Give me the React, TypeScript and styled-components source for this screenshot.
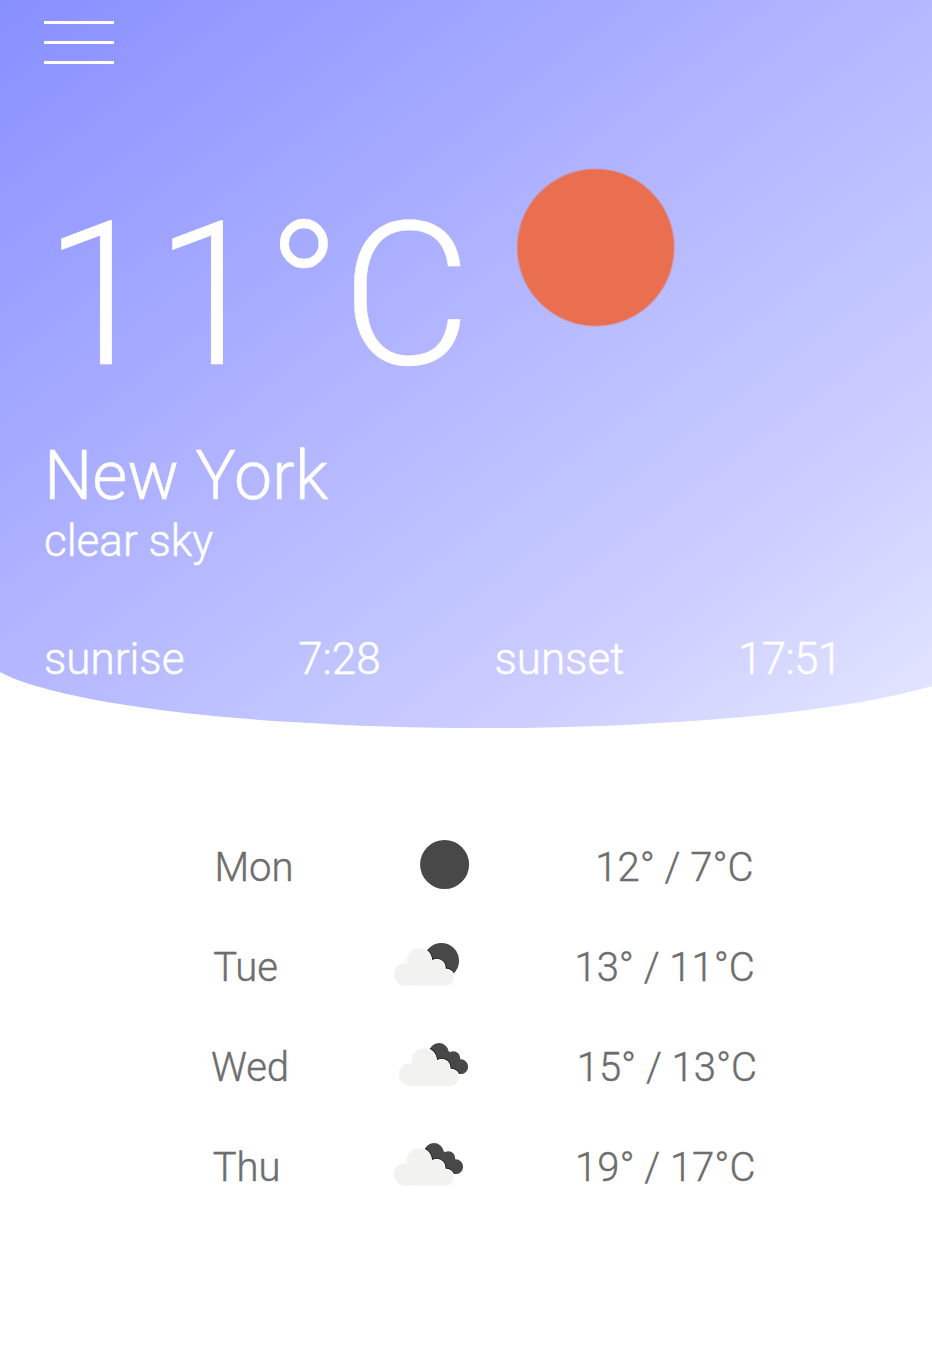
import React from "react";
import styled, { createGlobalStyle } from "styled-components";

const GlobalStyle = createGlobalStyle`
  * { box-sizing: border-box; }
  body {
    margin: 0;
    background: #fff;
    font-family: Roboto, "Liberation Sans", sans-serif;
    font-weight: 300;
    overflow-x: hidden;
  }
`;

const Page = styled.main`
  width: 932px;
  height: 1366px;
  overflow: hidden;
  background: #fff;
`;

const Header = styled.header`
  width: 1008px;
  height: 728px;
  margin-left: -20px;
  padding: 21px 0 0 64px;
  color: #fff;
  background: linear-gradient(143deg, #878eff 0%, #b3b6ff 46%, #c0c4ff 63%, #cdcdff 76%, #d7daff 86%, #e9e9ff 100%);
  border-radius: 0 0 504px 504px / 0 0 77.5px 77.5px;
`;

const MenuButton = styled.button`
  display: flex;
  flex-direction: column;
  gap: 17px;
  width: 70px;
  padding: 0;
  border: 0;
  background: none;
`;

const MenuLine = styled.span`
  width: 100%;
  height: 3px;
  background: #fff;
`;

const Current = styled.section`
  display: flex;
  height: 320px;
  margin-top: 24px;
`;

const Temperature = styled.h1`
  width: 392px;
  margin: 0;
  padding-top: 108px;
  font-size: 200px;
  font-weight: 300;
  line-height: 200px;
  white-space: nowrap;
  -webkit-text-stroke: 0.4px currentColor;
`;

const CurrentIcon = styled.svg`
  width: 320px;
  height: 320px;
`;

const City = styled.h2`
  margin: 34px 0 0;
  font-size: 68px;
  font-weight: 300;
  line-height: 68px;
  -webkit-text-stroke: 0.5px currentColor;
`;

const Description = styled.p`
  margin: 9px 0 0;
  font-size: 44px;
  line-height: 44px;
  -webkit-text-stroke: 0.5px currentColor;
`;

const SunTimes = styled.div`
  display: flex;
  justify-content: space-between;
  width: 797.5px;
  margin-top: 74px;
  font-size: 44px;
  line-height: 44px;
  -webkit-text-stroke: 0.5px currentColor;
`;

const SunTime = styled.span<{ $tight?: boolean }>`
  letter-spacing: ${({ $tight }) => ($tight ? "-0.7px" : "normal")};
`;

const Forecast = styled.section`
  width: 640px;
  margin: 87px 0 0 164px;
`;

const Day = styled.div`
  display: flex;
  justify-content: space-around;
  align-items: center;
  height: 100px;
  color: #6d6d6d;
  font-size: 40px;
  line-height: 40px;
`;

const Label = styled.span`
  padding-top: 6px;
  white-space: nowrap;
  -webkit-text-stroke: 0.4px currentColor;
`;

const DayIcon = styled.svg`
  width: 100px;
  height: 100px;
`;

type Kind = "sun" | "partly" | "clouds";

const viewBoxes: Record<Kind, string> = {
  sun: "-0.6 0 100 100",
  partly: "-0.6 0 100 100",
  clouds: "1.6 0 100 100",
};

const Cloud = () => (
  <>
    <circle cx="28.7" cy="59.5" r="11.2" />
    <circle cx="42.5" cy="45.5" r="12.2" />
    <circle cx="60.2" cy="52.6" r="8" />
    <circle cx="69.2" cy="62.5" r="8.2" />
    <path d="M28.7 70.7V50L42 45L60 53L69.2 62V70.7Z" />
  </>
);

const WeatherIcon = ({ kind }: { kind: Kind }) => (
  <DayIcon viewBox={viewBoxes[kind]}>
    {kind === "sun" && <circle cx="50" cy="49.5" r="24.5" fill="#484849" />}
    {kind !== "sun" && (
      <>
        <clipPath id={`back-${kind}`}>
          {kind === "partly" ? (
            <circle cx="64.8" cy="45.7" r="17.7" />
          ) : (
            <>
              <circle cx="57.5" cy="38" r="10" />
              <circle cx="72" cy="43" r="6.8" />
              <circle cx="79.3" cy="51.7" r="7.4" />
              <path d="M50 42L60 34L72 38L82 49L77 59L60 65Z" />
            </>
          )}
        </clipPath>
        <g clipPath={`url(#back-${kind})`}>
          <rect width="100" height="100" fill="#484849" />
          <g fill="#1d1d1e" stroke="#1d1d1e" strokeWidth="3.4">
            <Cloud />
          </g>
        </g>
        <g fill="#fff" stroke="#fff" strokeWidth="1.8">
          <Cloud />
        </g>
        <g fill="#f2f2f0">
          <Cloud />
        </g>
      </>
    )}
  </DayIcon>
);

const days: { name: string; kind: Kind; range: string }[] = [
  { name: "Mon", kind: "sun", range: "12° / 7°C" },
  { name: "Tue", kind: "partly", range: "13° / 11°C" },
  { name: "Wed", kind: "clouds", range: "15° / 13°C" },
  { name: "Thu", kind: "clouds", range: "19° / 17°C" },
];

export default function App() {
  return (
    <Page>
      <GlobalStyle />
      <Header>
        <MenuButton aria-label="Menu">
          <MenuLine />
          <MenuLine />
          <MenuLine />
        </MenuButton>
        <Current>
          <Temperature>11°C</Temperature>
          <CurrentIcon viewBox="0 0 320 320">
            <defs>
              <radialGradient id="sun-edge">
                <stop offset="0.973" stopColor="#ea6f51" />
                <stop offset="1" stopColor="#ea6f51" stopOpacity="0" />
              </radialGradient>
            </defs>
            <circle cx="159.7" cy="159.5" r="79.6" fill="url(#sun-edge)" />
          </CurrentIcon>
        </Current>
        <City>New York</City>
        <Description>clear sky</Description>
        <SunTimes>
          <SunTime>sunrise</SunTime>
          <SunTime>7:28</SunTime>
          <SunTime>sunset</SunTime>
          <SunTime $tight>17:51</SunTime>
        </SunTimes>
      </Header>
      <Forecast>
        {days.map((day) => (
          <Day key={day.name}>
            <Label>{day.name}</Label>
            <WeatherIcon kind={day.kind} />
            <Label>{day.range}</Label>
          </Day>
        ))}
      </Forecast>
    </Page>
  );
}
